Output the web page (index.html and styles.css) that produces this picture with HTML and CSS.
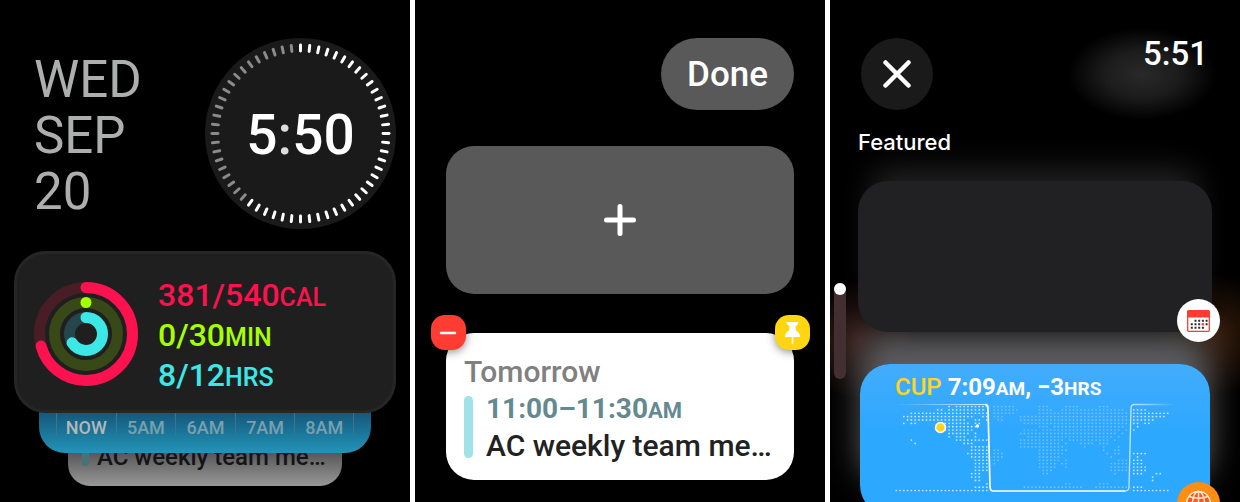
FILE: index.html
```html
<!DOCTYPE html>
<html lang="en">
<head>
  <meta charset="UTF-8" />
  <meta name="viewport" content="width=device-width, initial-scale=1.0" />
  <title>Smart Stack</title>
  <link rel="stylesheet" href="styles.css">
</head>
<body>
  <!-- Smart Stack -->
  <section class="screen stack-screen">
    <header class="stack-header">
      <div class="date">WED<br>SEP<br>20</div>
      <div class="clock">
        <svg class="clock-face" viewBox="-96 -96 192 192">
          <circle r="96" fill="#1a1a1b"/>
          <g id="ticks"></g>
        </svg>
        <time class="clock-time">5<span class="colon">:</span>50</time>
      </div>
    </header>

    <div class="stack">
      <article class="activity">
        <svg class="rings" viewBox="-52 -52 104 104">
          <g fill="none" stroke-width="11" stroke-linecap="round" transform="rotate(-90)">
            <circle r="46.5" stroke="#481d26"/>
            <circle r="31.5" stroke="#384817"/>
            <circle r="16.5" stroke="#25474c"/>
            <circle r="46.5" stroke="#fb124e" pathLength="100" stroke-dasharray="70.8 100"/>
            <circle r="16.5" stroke="#3be8e6" pathLength="100" stroke-dasharray="66 100"/>
          </g>
          <circle cy="-31.5" r="5.5" fill="#a6ff00"/>
        </svg>
        <div class="goals">
          <div class="move">381/540<span class="unit">CAL</span></div>
          <div class="exercise">0/30<span class="unit">MIN</span></div>
          <div class="stand">8/12<span class="unit">HRS</span></div>
        </div>
      </article>
      <article class="hourly">
        <span class="now">NOW</span>
        <span>5AM</span>
        <span>6AM</span>
        <span>7AM</span>
        <span>8AM</span>
      </article>
      <article class="peek">
        <span class="peek-bar"></span>
        <span>AC weekly team me…</span>
      </article>
    </div>
  </section>

  <!-- Edit mode -->
  <section class="screen edit-screen">
    <button class="done">Done</button>
    <button class="add" aria-label="Add widget">
      <svg width="32" height="32" viewBox="0 0 32 32">
        <path d="M16 2.5V29.5M2.5 16H29.5" stroke="#fff" stroke-width="5" stroke-linecap="round"/>
      </svg>
    </button>
    <article class="event">
      <button class="badge remove" aria-label="Remove">
        <svg width="35" height="35" viewBox="0 0 35 35">
          <path d="M10 18H24" stroke="#fff" stroke-width="2.5" stroke-linecap="round"/>
        </svg>
      </button>
      <button class="badge pin" aria-label="Pin">
        <svg width="35" height="35" viewBox="0 0 35 35">
          <path d="M12 7H23Q24 8 22.5 9.5L20.5 11.5L21 15.5Q25 18 25 21.5Q25 22 24 22H11Q10 22 10 21.5Q10 18 14 15.5L14.5 11.5L12.5 9.5Q11 8 12 7Z" fill="#fff"/>
          <path d="M17.5 22V28.5" stroke="#fff" stroke-width="1.5" stroke-linecap="round"/>
        </svg>
      </button>
      <div class="event-day">Tomorrow</div>
      <div class="event-body">
        <div class="event-time">11:00–11:30<span class="unit">AM</span></div>
        <div class="event-title">AC weekly team me…</div>
      </div>
    </article>
  </section>

  <!-- Widget gallery -->
  <section class="screen gallery-screen">
    <header class="gallery-header">
      <button class="close" aria-label="Close">
        <svg width="28" height="28" viewBox="0 0 28 28">
          <path d="M2.5 2.5L25.5 25.5M25.5 2.5L2.5 25.5" stroke="#fff" stroke-width="4.5" stroke-linecap="round"/>
        </svg>
      </button>
      <time class="status-time">5:51</time>
    </header>
    <h2 class="gallery-title">Featured</h2>
    <div class="scroll-track"><div class="scroll-thumb"></div></div>

    <article class="widget calendar">
      <span class="app-icon calendar-icon">
        <svg width="43" height="43" viewBox="0 0 43 43">
          <rect x="10.7" y="11.7" width="21.6" height="20.6" rx="1" fill="#fff" stroke="#ff3b30" stroke-width="1.3"/>
          <path d="M10.5 11.5H32.5V18.5H10.5Z" fill="#ff3b30"/>
          <path d="M17.5 21.8h2m1.7 0h2m1.7 0h2m1.7 0h2M13.8 25.3h2m1.7 0h2m1.7 0h2m5.4 0h2M13.8 28.8h2m1.7 0h2m1.7 0h2m1.7 0h2" stroke="#2b2b2b" stroke-width="2"/>
          <path d="M24.7 25.3h2.3" stroke="#ff3b30" stroke-width="2.3"/>
        </svg>
      </span>
    </article>

    <article class="widget world">
      <div class="world-label"><span class="city">CUP</span> 7:09<span class="unit">AM</span>, −3<span class="unit">HRS</span></div>
      <svg class="world-map" width="280" height="92" viewBox="0 0 280 92">
        <defs>
          <linearGradient id="fade-left" gradientUnits="userSpaceOnUse" x1="0" y1="0" x2="92" y2="0">
            <stop offset="0" stop-color="#fff" stop-opacity="0"/>
            <stop offset="1" stop-color="#fff" stop-opacity=".8"/>
          </linearGradient>
          <linearGradient id="fade-right" gradientUnits="userSpaceOnUse" x1="236" y1="0" x2="280" y2="0">
            <stop offset="0" stop-color="#fff" stop-opacity=".7"/>
            <stop offset="1" stop-color="#fff" stop-opacity="0"/>
          </linearGradient>
        </defs>
        <!-- one dash per dot, each run is a line of columns -->
        <g class="dots" transform="translate(1.3 4.5) scale(3.77 3.36)">
          <path class="day" d="M14 0h.1M16 0h8.1
            M11 1h1.1M14 1h9.1M63 1h3.1
            M4 2h20.1M63 2h9.1
            M2 3h18.1M23 3h1.1M63 3h8.1
            M3 4h6.1M10 4h8.1M21 4h1.1M24 4h.1M63 4h5.1
            M2 5h.1M4 5h1.1M12 5h7.1M21 5h1.1M63 5h1.1M66 5h1.1
            M12 6h9.1M64 6h.1
            M13 7h7.1M63 7h.1
            M14 8h5.1M21 8h.1
            M14 9h.1M16 9h2.1M21 9h.1
            M4 10h.1M16 10h8.1
            M5 11h.1M18 11h2.1
            M20 12h4.1M20 13h4.1
            M19 14h5.1M63 14h3.1
            M20 15h4.1M64 15h.1
            M21 16h3.1M63 16h2.1
            M21 17h3.1M63 17h2.1
            M21 18h3.1M63 18h3.1
            M21 19h3.1M63 19h3.1
            M20 20h2.1M63 20h2.1M69 20h1.1
            M20 21h2.1M68 21h.1
            M21 22h1.1M68 22h.1
            M24 23h.1
            M21 24h3.1M63 24h2.1
            M0 25h24.1M63 25h9.1"/>
          <path class="night" d="M26 0h5.1M38 0h2.1M45 0h3.1M54 0h2.1
            M26 1h6.1M38 1h3.1M44 1h16.1
            M26 2h5.1M38 2h23.1
            M26 3h2.1M33 3h28.1
            M27 4h1.1M33 4h28.1
            M34 5h27.1
            M38 6h2.1M42 6h18.1
            M34 7h3.1M39 7h20.1M61 7h.1
            M33 8h4.1M38 8h7.1M46 8h12.1M60 8h.1
            M35 9h22.1M59 9h.1
            M33 10h11.1M46 10h10.1M58 10h.1
            M33 11h10.1M45 11h.1M49 11h3.1M54 11h2.1
            M33 12h11.1M50 12h.1M55 12h.1M59 12h.1
            M26 13h1.1M38 13h7.1M55 13h.1M58 13h1.1
            M26 14h2.1M38 14h6.1M56 14h.1M58 14h1.1
            M26 15h2.1M38 15h5.1M57 15h.1
            M26 16h1.1M38 16h5.1M45 16h.1M59 16h2.1
            M26 17h.1M38 17h4.1M44 17h1.1M57 17h4.1
            M38 18h4.1M45 18h.1M57 18h4.1
            M39 19h2.1M57 19h4.1
            M39 20h1.1M58 20h.1
            M45 23h1.1M54 23h2.1
            M34 24h15.1M53 24h8.1"/>
        </g>
        <path d="M2 2.5H90Q93 2.5 93 6" fill="none" stroke="url(#fade-left)"/>
        <path d="M90 2.5Q93 2.5 93 6L95 84Q95 89 98 89H230" fill="none" stroke="#fff" stroke-width="1.7"/>
        <path d="M230 89Q234 89 234 85L236 6Q236 2.5 239 2.5H280" fill="none" stroke="url(#fade-right)" stroke-width="1.3"/>
        <circle cx="82.5" cy="24" r="1.7" fill="#fff"/>
        <circle cx="45.5" cy="25.5" r="5" fill="#ffd51f" stroke="#fff" stroke-width="1.5"/>
      </svg>
      <span class="app-icon globe-icon">
        <svg width="43" height="43" viewBox="0 0 43 43">
          <circle cx="21.5" cy="21.5" r="12" fill="#f9571c"/>
          <g fill="none" stroke="#ffe9d0" stroke-width="1.5">
            <circle cx="21.5" cy="21.5" r="12"/>
            <ellipse cx="21.5" cy="21.5" rx="6" ry="12"/>
            <path d="M21.5 9.5V33.5M9.5 21.5H33.5M12 14.5Q21.5 18 31 14.5M12 28.5Q21.5 25 31 28.5"/>
          </g>
        </svg>
      </span>
    </article>
  </section>

  <script>
    // minute ticks, lit up to the current second
    const ticks = document.getElementById("ticks");
    const seconds = 36;
    for (let i = 0; i < 60; i++) {
      const tick = document.createElementNS("http://www.w3.org/2000/svg", "line");
      tick.setAttribute("y1", -89);
      tick.setAttribute("y2", -83);
      tick.setAttribute("class", i <= seconds ? "tick lit" : "tick");
      tick.setAttribute("transform", `rotate(${i * 6})`);
      ticks.appendChild(tick);
    }
  </script>
</body>
</html>
```
FILE: styles.css
```css
* {
  box-sizing: border-box;
}
body {
  margin: 0;
  min-height: 100vh;
  display: grid;
  grid-template-columns: repeat(3, minmax(0, 1fr));
  gap: 5px;
  background: #fff;
  color: #fff;
  font-family: Roboto, Arial, sans-serif;
  font-weight: 500;
}
button {
  padding: 0;
  border: none;
  color: inherit;
  font: inherit;
  cursor: pointer;
}
svg {
  display: block;
}
.screen {
  position: relative;
  height: 100vh;
  overflow: hidden;
  background: #000;
}
.unit {
  font-size: 24px;
  line-height: 1;
}

/* Smart Stack */
.stack-screen {
  padding: 38px 14px 0;
}
.stack-header {
  display: flex;
  justify-content: space-between;
  align-items: center;
  padding-left: 20px;
}
.date {
  padding-top: 4px;
  color: #adaeae;
  font-size: 51px;
  font-weight: 400;
  line-height: 56px;
}
.clock {
  display: grid;
  place-items: center;
}
.clock-face, .clock-time {
  grid-area: 1 / 1;
}
.clock-face {
  width: 191px;
  height: 191px;
}
.clock-time {
  padding-top: 2px;
  font-size: 55px;
  line-height: 56px;
}
.colon {
  color: #ddd;
}
.tick {
  stroke: #8b8b8c;
  stroke-width: 3;
  stroke-linecap: round;
}
.lit {
  stroke: #fff;
}
.stack {
  display: flex;
  flex-direction: column;
  margin-top: 22px;
}
.activity {
  position: relative;
  z-index: 2;
  display: flex;
  align-items: center;
  gap: 20px;
  height: 162px;
  padding: 4px 17px 0;
  border: 3px solid #262627;
  border-radius: 32px;
  background: #1f1f20;
}
.rings {
  width: 104px;
  height: 104px;
}
.goals {
  padding-top: 2px;
  font-size: 32px;
  line-height: 40px;
}
.goals .unit {
  font-size: 25px;
}
.move {
  color: #fb124e;
}
.exercise {
  color: #a6ff00;
}
.stand {
  color: #3be8e6;
}
.hourly {
  position: relative;
  z-index: 1;
  display: grid;
  grid-template-columns: repeat(5, 1fr);
  height: 60px;
  margin: -20px 25px 0;
  padding: 20px 17px 0;
  border-radius: 0 0 26px 26px;
  background: linear-gradient(#155a7c 35%, #2294b9);
  color: #78a0ae;
  font-size: 18px;
  line-height: 30px;
  text-align: center;
}
.hourly span {
  height: 22px;
  border-left: 1px solid #3a7490;
}
.hourly span:last-child {
  border-right: 1px solid #3a7490;
}
.hourly .now {
  color: #b3b7ba;
}
.peek {
  display: flex;
  gap: 8px;
  height: 53px;
  margin: -20px 54px 0;
  padding: 10px 14px 0;
  border-radius: 0 0 22px 22px;
  background: linear-gradient(#555 35%, #989898);
  color: #141414;
  font-size: 24px;
  line-height: 28px;
  white-space: nowrap;
}
.peek-bar {
  width: 7px;
  height: 23px;
  border-radius: 4px;
  background: #477276;
}

/* Edit mode */
.edit-screen {
  display: flex;
  flex-direction: column;
  padding: 38px 31px 0;
}
.done {
  align-self: flex-end;
  height: 72px;
  padding: 0 26px;
  border-radius: 36px;
  background: #595959;
  font-size: 35px;
}
.add {
  display: grid;
  place-items: center;
  height: 148px;
  margin: 36px 0 39px;
  border-radius: 28px;
  background: #595959;
}
.event {
  position: relative;
  height: 147px;
  padding: 20px 18px 0;
  border-radius: 28px;
  background: #fff;
  font-size: 30px;
  line-height: 37px;
  white-space: nowrap;
}
.badge {
  position: absolute;
  top: -18px;
  width: 35px;
  height: 35px;
  border-radius: 14px;
  box-shadow: 0 2px 8px rgba(0, 0, 0, 0.45);
}
.remove {
  left: -15px;
  background: #ff3c32;
}
.pin {
  right: -16px;
  background: #ffd60f;
}
.event-day {
  color: #808080;
}
.event-body {
  display: grid;
  grid-template-columns: 9px 1fr;
  column-gap: 13px;
}
.event-body::before {
  content: "";
  grid-row: 1 / 3;
  margin: 6px 0;
  border-radius: 5px;
  background: #a0e2e7;
}
.event-time {
  color: #648990;
  font-size: 28px;
  font-weight: 700;
}
.event-time .unit {
  font-size: 22px;
}
.event-title {
  color: #222;
}

/* Widget gallery */
.gallery-screen {
  padding: 38px 28px 0;
  background:
    radial-gradient(ellipse 74px 46px at 312px 74px, #292929, #1c1c1c 50%, transparent),
    radial-gradient(circle 62px at 385px 334px, #351c0a, transparent),
    radial-gradient(circle 60px at 28px 340px, #38201c, transparent),
    #000;
}
.gallery-header {
  display: flex;
  justify-content: space-between;
  align-items: flex-start;
  padding: 0 4px 0 3px;
}
.close {
  display: grid;
  place-items: center;
  width: 72px;
  height: 72px;
  border-radius: 50%;
  background: #1a1a1b;
}
.status-time {
  font-size: 33px;
  line-height: 32px;
}
.gallery-title {
  position: relative;
  z-index: 2;
  margin: 18px 0 25px;
  font-family: Inter, sans-serif;
  font-size: 22px;
  font-weight: 500;
  line-height: 28px;
}
.scroll-track {
  position: absolute;
  top: 283px;
  left: 4px;
  z-index: 1;
  width: 12px;
  height: 96px;
  border-radius: 6px;
  background: #432f32;
}
.scroll-thumb {
  height: 12px;
  border-radius: 50%;
  background: #fff;
}
.widget {
  position: relative;
  height: 151px;
  border-radius: 30px;
}
.calendar {
  z-index: 1;
  background: #212123;
  box-shadow: 0 -26px 30px -14px #222223;
}
.world {
  margin: 32px 2px 0;
  padding: 9px 35px 0;
  background: linear-gradient(#43acfb, #2da8ff 45%);
  box-shadow: 0 -32px 32px 0 #5c5c5e;
}
.world-label {
  font-size: 24px;
  font-weight: 700;
  line-height: 28px;
}
.world-label .unit {
  font-size: 19px;
}
.city {
  color: #ffd51f;
  font-weight: 500;
}
.world-map {
  margin-top: 1px;
}
.dots {
  stroke-width: 0.5;
  stroke-linecap: round;
  stroke-dasharray: 0 1;
}
.day {
  stroke: #c4e6ff;
}
.night {
  stroke: #70c1fd;
}
.app-icon {
  position: absolute;
  right: -8px;
  bottom: -10px;
  width: 43px;
  height: 43px;
  border-radius: 50%;
}
.calendar-icon {
  background: #fff;
}
.globe-icon {
  right: -10px;
  background: #ff8d12;
}
```
